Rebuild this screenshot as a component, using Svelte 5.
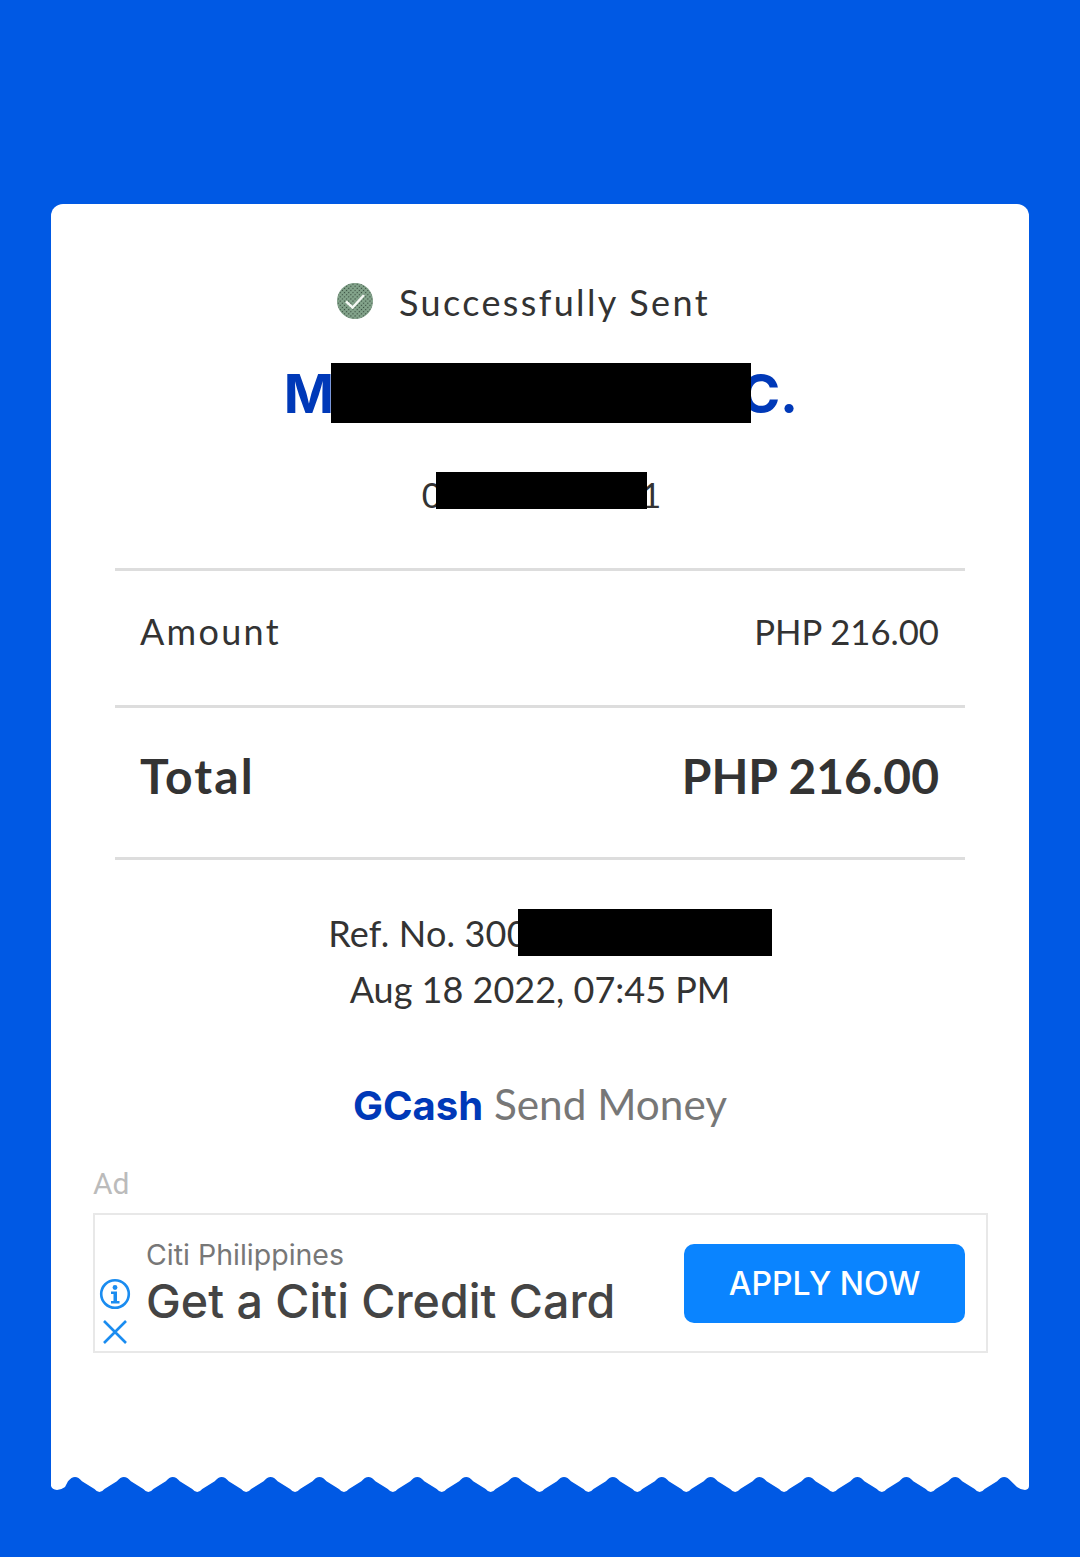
<script lang="ts">
	const period = 48.9;
	const firstPeak = 24;
	const peakCount = 20;

	function wavePath() {
		let d = 'M0 0 V9 Q1 12.5 6 13 Q10 13 14 10 L' + (firstPeak - 7) + ' 4.3 Q' + firstPeak + ' -4.3 ' + (firstPeak + 7) + ' 4.3';
		for (let i = 0; i < peakCount - 1; i++) {
			const t = firstPeak + period * (i + 0.5);
			const p = firstPeak + period * (i + 1);
			d += ` L${t - 5} 12 Q${t} 18 ${t + 5} 12`;
			d += ` L${p - 7} 4.3 Q${p} -4.3 ${p + 7} 4.3`;
		}
		d += ' L966 10 Q970 13 974 13 Q978 12.5 978 9 V0 Z';
		return d;
	}
</script>

<div class="page">
	<div class="receipt">
		<div class="status">
			<svg class="check" width="38" height="38" viewBox="0 0 38 38" aria-hidden="true">
				<defs>
					<pattern id="dots" width="3" height="3" patternUnits="userSpaceOnUse" patternTransform="rotate(45)">
						<rect width="3" height="3" fill="#84a58c" />
						<circle cx="1.5" cy="1.5" r="0.7" fill="#35493c" />
					</pattern>
				</defs>
				<circle cx="19" cy="19" r="18" fill="url(#dots)" />
				<path d="M10 19.5l6.5 6 11.5-12.5" fill="none" stroke="#f4f8f4" stroke-width="2.4" />
			</svg>
			<span>Successfully Sent</span>
		</div>

		<div class="name">
			<span>M</span>
			<span class="bar name-bar"></span>
			<span class="name-end">C.</span>
		</div>

		<div class="phone">
			<span class="digit">0</span>
			<span class="bar phone-bar"></span>
			<span class="digit last">1</span>
		</div>

		<div class="lines">
			<div class="row amount">
				<span class="label">Amount</span>
				<span class="value">PHP 216.00</span>
			</div>
			<div class="row total">
				<span class="total-label">Total</span>
				<span>PHP 216.00</span>
			</div>
		</div>

		<div class="ref">
			<div class="ref-no">
				<span>Ref. No. 300</span>
				<span class="bar ref-bar"></span>
			</div>
			<div class="date">Aug 18 2022, 07:45 PM</div>
		</div>

		<div class="brand"><b>GCash</b> Send Money</div>

		<div class="ad-label">Ad</div>
		<div class="ad">
			<div class="ad-icons">
				<svg width="32" height="32" viewBox="0 0 32 32" aria-hidden="true">
					<circle cx="16" cy="16" r="13.8" fill="none" stroke="#1a8cf0" stroke-width="2.6" />
					<circle cx="16" cy="9.5" r="2.4" fill="#1a8cf0" />
					<path d="M12 13.5h6v9.5h2.5v2.5h-8.5v-2.5h2.5v-7h-2.5z" fill="#1a8cf0" />
				</svg>
				<svg width="26" height="26" viewBox="0 0 26 26" aria-hidden="true">
					<path d="M2 2l22 22M24 2L2 24" fill="none" stroke="#1a8cf0" stroke-width="2.6" />
				</svg>
			</div>
			<div class="ad-text">
				<div class="advertiser">Citi Philippines</div>
				<div class="headline">Get a Citi Credit Card</div>
			</div>
			<div class="apply">APPLY NOW</div>
		</div>
	</div>
	<svg class="wave" width="978" height="16" viewBox="0 0 978 16" aria-hidden="true">
		<path d={wavePath()} fill="#fff" />
	</svg>
</div>

<style>
	:global(body) {
		margin: 0;
		background: #0059e4;
	}

	.page {
		box-sizing: border-box;
		height: 1557px;
		padding: 204px 51px 0;
		font-family: Lato, sans-serif;
		color: #333;
	}

	.receipt {
		box-sizing: border-box;
		height: 1273px;
		background: #fff;
		border-radius: 12px 12px 0 0;
		padding-top: 78px;
		display: flex;
		flex-direction: column;
		align-items: center;
	}

	.wave {
		display: block;
		overflow: visible;
	}

	.bar {
		display: block;
		position: relative;
		z-index: 1;
		background: #000;
	}

	.status {
		display: flex;
		align-items: center;
		gap: 25px;
		height: 40px;
		padding-right: 34px;
		font-size: 36px;
		letter-spacing: 2.35px;
	}

	.check {
		margin-top: -2px;
	}

	.name {
		display: flex;
		align-items: center;
		margin-top: 41px;
		height: 60px;
		padding-left: 2px;
		font-family: Inter, sans-serif;
		font-weight: 700;
		font-size: 54px;
		color: #0039b8;
	}

	.name-bar {
		width: 420px;
		height: 60px;
		margin-left: -3px;
	}

	.name-end {
		margin-left: -11px;
	}

	.phone {
		display: flex;
		align-items: center;
		margin-top: 49px;
		height: 37px;
		padding-left: 3px;
		font-size: 35px;
	}

	.digit {
		margin-top: 6px;
	}

	.digit.last {
		margin-left: -6px;
	}

	.phone-bar {
		width: 211px;
		height: 37px;
		margin-left: -6px;
	}

	.lines {
		align-self: stretch;
		margin: 59px 64px 0;
		border-top: 3px solid #ddd;
	}

	.row {
		box-sizing: border-box;
		display: flex;
		justify-content: space-between;
		align-items: center;
		padding: 0 26px;
		border-bottom: 3px solid #ddd;
	}

	.amount {
		height: 137px;
		padding-bottom: 14px;
		font-size: 36px;
	}

	.label {
		letter-spacing: 2.3px;
		margin-left: -1px;
	}

	.value {
		font-size: 34.7px;
	}

	.total {
		height: 152px;
		padding-bottom: 14px;
		font-size: 48px;
		font-weight: 700;
	}

	.total-label {
		letter-spacing: 2.1px;
		margin-left: -1px;
	}

	.ref {
		margin-top: 49px;
		font-size: 36px;
		text-align: center;
	}

	.ref-no {
		display: flex;
		align-items: center;
		height: 47px;
		padding-left: 20px;
		letter-spacing: 0.17px;
	}

	.ref-bar {
		width: 254px;
		height: 47px;
		margin-left: -10px;
	}

	.date {
		margin-top: 10px;
		height: 47px;
		line-height: 47px;
	}

	.brand {
		margin-top: 66px;
		height: 50px;
		line-height: 50px;
		font-size: 42.3px;
		color: #777;
	}

	.brand b {
		font-family: Inter, sans-serif;
		font-size: 40px;
		color: #0039b8;
	}

	.ad-label {
		align-self: stretch;
		margin: 35px 0 0 42px;
		height: 40px;
		line-height: 40px;
		font-family: Roboto, sans-serif;
		font-size: 30px;
		color: #bbb;
	}

	.ad {
		box-sizing: border-box;
		align-self: stretch;
		margin: 9px 41px 0 42px;
		height: 140px;
		border: 2px solid #e8e8e8;
		display: flex;
		font-family: Inter, sans-serif;
	}

	.ad-icons {
		width: 40px;
		padding: 63px 0 0 0;
		display: flex;
		flex-direction: column;
		align-items: center;
		gap: 9px;
	}

	.ad-text {
		flex: 1;
		padding: 23px 0 0 11px;
	}

	.advertiser {
		font-size: 28.5px;
		line-height: 34px;
		color: #777;
	}

	.headline {
		margin-top: 2px;
		font-size: 46.6px;
		line-height: 54px;
		font-weight: 500;
		color: #444;
	}

	.apply {
		margin: 29px 21px 0 0;
		width: 281px;
		height: 79px;
		line-height: 79px;
		border-radius: 10px;
		background: #0a84ff;
		color: #fff;
		font-size: 32px;
		font-weight: 500;
		text-align: center;
	}
</style>
